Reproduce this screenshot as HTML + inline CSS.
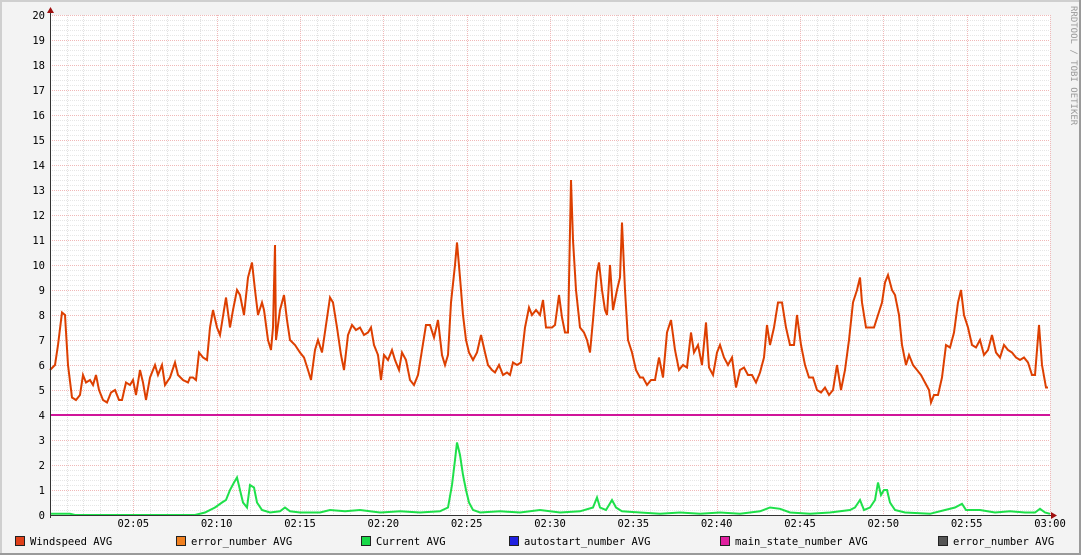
<!DOCTYPE html>
<html><head><meta charset="utf-8"><style>
html,body{margin:0;padding:0;background:#f3f3f3;}
svg{display:block}
text{font-family:"DejaVu Sans Mono","Liberation Mono",monospace;font-size:10.5px;fill:#000}
</style></head><body>
<svg id="g" width="1081" height="555" xmlns="http://www.w3.org/2000/svg">
<rect x="0" y="0" width="1081" height="555" fill="#f3f3f3"/>
<rect x="0" y="0" width="1081" height="2" fill="#cfcfcf"/>
<rect x="0" y="0" width="2" height="555" fill="#cfcfcf"/>
<rect x="1079" y="0" width="2" height="555" fill="#9a9a9a"/>
<rect x="0" y="553" width="1081" height="2" fill="#9a9a9a"/>
<rect x="50" y="15" width="1000" height="500" fill="#fff"/>
<g id="grid"></g>
<g id="lab"></g>
<text x="1071" y="6" transform="rotate(90 1071 6)" style="font-size:9px;fill:#999">RRDTOOL / TOBI OETIKER</text>
<line x1="50" y1="415" x2="1050" y2="415" stroke="#d0159a" stroke-width="2"/>
<path id="grn" fill="none" stroke="#1ee04a" stroke-width="2"/>
<path id="red" fill="none" stroke="#dd3f00" stroke-width="2"/>
<line x1="50" y1="515.5" x2="1054" y2="515.5" stroke="#333" stroke-width="1"/>
<line x1="50.5" y1="12" x2="50.5" y2="518" stroke="#333" stroke-width="1"/>
<polygon points="47,13 54,13 50.5,7" fill="#a01010"/>
<polygon points="1051,512 1051,519 1057,515.5" fill="#a01010"/>
<g id="leg"></g>
</svg>
<script>
var NS="http://www.w3.org/2000/svg";
function el(t,a,p,txt){var e=document.createElementNS(NS,t);for(var k in a)e.setAttribute(k,a[k]);if(txt!=null)e.textContent=txt;document.getElementById(p).appendChild(e);return e;}
for(var i=1;i<100;i++){var y=515-i*5;if(i%5==0)continue;el("line",{x1:50,x2:1050,y1:y+0.5,y2:y+0.5,stroke:"#e6e6e6","stroke-dasharray":"1,1"},"grid");}
for(var m=1;m<=60;m++){var x=50+m*1000/60;if(m%5==0)continue;el("line",{x1:Math.round(x)+0.5,x2:Math.round(x)+0.5,y1:15,y2:515,stroke:"#e0e0e0","stroke-dasharray":"1,1"},"grid");}
for(var v=1;v<=20;v++){var y=515-v*25;el("line",{x1:50,x2:1050,y1:y+0.5,y2:y+0.5,stroke:"#f0b8b8","stroke-dasharray":"1,1"},"grid");}
for(var m=5;m<=60;m+=5){var x=Math.round(50+m*1000/60)+0.5;el("line",{x1:x,x2:x,y1:15,y2:515,stroke:"#f0b8b8","stroke-dasharray":"1,1"},"grid");}
for(var v=0;v<=20;v++){el("text",{x:45,y:515-v*25+4,"text-anchor":"end"},"lab",String(v));}
for(var m=5;m<=60;m+=5){var x=50+m*1000/60;var h=2+Math.floor(m/60),mm=m%60;var s="0"+h+":"+(mm<10?"0":"")+mm;el("text",{x:x,y:527,"text-anchor":"middle"},"lab",s);}
var R=[50,5.8,55,6.0,58,6.8,62,8.1,65,8.0,68,6.0,72,4.7,76,4.6,80,4.8,83,5.6,86,5.3,90,5.4,93,5.2,96,5.6,99,5.0,103,4.6,107,4.5,111,4.9,115,5.0,119,4.6,122,4.6,126,5.3,130,5.2,133,5.4,136,4.8,140,5.8,143,5.3,146,4.6,150,5.5,155,6.0,158,5.6,162,6.0,165,5.2,170,5.5,175,6.1,178,5.6,183,5.4,188,5.3,190,5.5,193,5.5,196,5.4,199,6.5,203,6.3,207,6.2,210,7.5,213,8.2,217,7.5,220,7.2,226,8.7,230,7.5,233,8.2,237,9.0,240,8.8,244,8.0,248,9.5,252,10.1,255,9.0,258,8.0,262,8.5,264,8.2,268,7.0,271,6.6,273,7.5,275,10.8,276,7.0,280,8.2,284,8.8,287,7.8,290,7.0,295,6.8,300,6.5,304,6.3,308,5.8,311,5.4,315,6.6,318,7.0,322,6.5,326,7.6,330,8.7,333,8.5,337,7.5,341,6.4,344,5.8,348,7.2,352,7.6,356,7.4,360,7.5,364,7.2,368,7.3,371,7.5,374,6.8,378,6.4,381,5.4,384,6.4,388,6.2,392,6.6,395,6.2,399,5.8,402,6.5,406,6.2,410,5.4,414,5.2,418,5.6,422,6.6,426,7.6,430,7.6,434,7.1,438,7.8,442,6.4,445,6.0,448,6.4,451,8.5,455,10.0,457,10.9,460,9.5,463,8.0,466,7.0,469,6.5,473,6.2,477,6.5,481,7.2,485,6.5,488,6.0,492,5.8,495,5.7,499,6.0,503,5.6,507,5.7,510,5.6,513,6.1,517,6.0,521,6.1,525,7.5,529,8.3,532,8.0,536,8.2,540,8.0,543,8.6,546,7.5,549,7.5,552,7.5,555,7.6,559,8.8,562,7.9,565,7.3,568,7.3,571,13.4,573,11.0,576,9.0,580,7.5,584,7.3,587,7.0,590,6.5,593,7.8,597,9.7,599,10.1,602,9.0,605,8.2,607,8.0,610,10.0,613,8.2,617,9.0,620,9.5,622,11.7,625,9.0,628,7.0,632,6.5,636,5.8,640,5.5,643,5.5,647,5.2,651,5.4,655,5.4,659,6.3,663,5.5,667,7.3,671,7.8,675,6.6,679,5.8,683,6.0,687,5.9,691,7.3,694,6.5,698,6.8,702,6.0,706,7.7,709,5.9,713,5.6,717,6.5,720,6.8,724,6.3,728,6.0,732,6.3,736,5.1,740,5.8,744,5.9,748,5.6,752,5.6,756,5.3,760,5.7,764,6.3,767,7.6,770,6.8,774,7.5,778,8.5,782,8.5,786,7.5,790,6.8,794,6.8,797,8.0,801,6.8,805,6.0,809,5.5,813,5.5,817,5.0,821,4.9,825,5.1,829,4.8,833,5.0,837,6.0,841,5.0,845,5.8,849,7.0,853,8.5,857,9.0,860,9.5,862,8.5,866,7.5,870,7.5,874,7.5,878,8.0,882,8.5,885,9.3,888,9.6,892,9.0,895,8.8,899,8.0,902,6.8,906,6.0,909,6.4,913,6.0,917,5.8,921,5.6,925,5.3,929,5.0,931,4.5,934,4.8,938,4.8,942,5.5,946,6.8,950,6.7,954,7.3,958,8.5,961,9.0,964,8.0,968,7.5,972,6.8,976,6.7,980,7.0,984,6.4,988,6.6,992,7.2,996,6.5,1000,6.3,1004,6.8,1008,6.6,1012,6.5,1016,6.3,1020,6.2,1024,6.3,1028,6.1,1032,5.6,1035,5.6,1039,7.6,1042,6.0,1046,5.1,1048,5.1];
var d="";for(var i=0;i<R.length;i+=2){d+=(i?"L":"M")+R[i]+","+(515-25*R[i+1]).toFixed(1);}
document.getElementById("red").setAttribute("d",d);
var G=[50,0.05,70,0.05,75,0,195,0,205,0.1,215,0.3,222,0.5,226,0.6,230,1.0,234,1.3,237,1.5,240,1.0,243,0.5,247,0.3,250,1.2,254,1.1,257,0.5,262,0.2,270,0.1,280,0.15,285,0.3,290,0.15,300,0.1,320,0.1,330,0.2,345,0.15,360,0.2,380,0.1,400,0.15,420,0.1,440,0.15,448,0.3,452,1.2,455,2.2,457,2.9,460,2.4,463,1.6,466,1.0,469,0.5,473,0.2,480,0.1,500,0.15,520,0.1,540,0.2,560,0.1,580,0.15,593,0.3,597,0.7,600,0.3,606,0.2,612,0.6,616,0.3,622,0.15,640,0.1,660,0.05,680,0.1,700,0.05,720,0.1,740,0.05,760,0.15,770,0.3,780,0.25,790,0.1,810,0.05,830,0.1,850,0.2,855,0.3,860,0.6,864,0.2,870,0.3,875,0.6,878,1.3,881,0.8,884,1.0,887,1.0,890,0.5,895,0.2,905,0.1,930,0.05,945,0.2,955,0.3,962,0.45,966,0.2,980,0.2,995,0.1,1010,0.15,1025,0.1,1035,0.1,1040,0.25,1045,0.1,1050,0.05];
d="";for(var i=0;i<G.length;i+=2){d+=(i?"L":"M")+G[i]+","+(515-25*G[i+1]).toFixed(1);}
document.getElementById("grn").setAttribute("d",d);
var L=[[15,"#e0401a","Windspeed AVG"],[176,"#f08020","error_number AVG"],[361,"#18d848","Current AVG"],[509,"#2020e0","autostart_number AVG"],[720,"#e020a0","main_state_number AVG"],[938,"#555555","error_number AVG"]];
L.forEach(function(l){el("rect",{x:l[0]+0.5,y:536.5,width:9,height:9,fill:l[1],stroke:"#222"},"leg");el("text",{x:l[0]+15,y:545},"leg",l[2]);});
</script>
</body></html>
